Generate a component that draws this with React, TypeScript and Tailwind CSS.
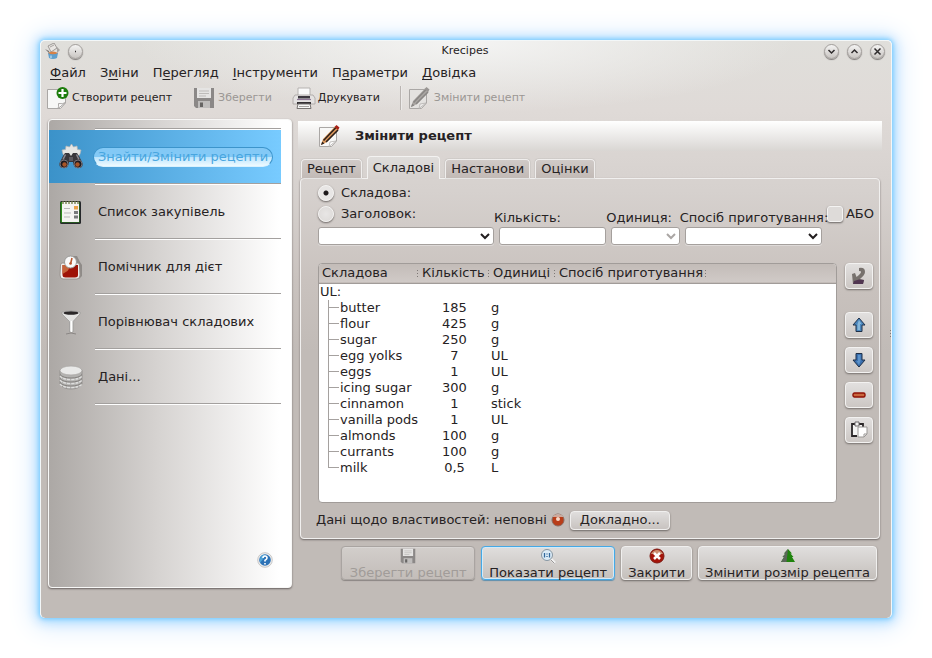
import React, { useState } from "react";

const navItems = [
  { label: "Знайти/Змінити рецепти", icon: <BinocularsIcon /> },
  { label: "Список закупівель", icon: <ListIcon /> },
  { label: "Помічник для дієт", icon: <ScaleIcon /> },
  { label: "Порівнювач складових", icon: <FunnelIcon /> },
  { label: "Дані...", icon: <DatabaseIcon /> },
];

const menus = [
  ["", "Ф", "айл"],
  ["З", "м", "іни"],
  ["П", "е", "регляд"],
  ["", "І", "нструменти"],
  ["П", "а", "раметри"],
  ["", "Д", "овідка"],
];

const ingredients = [
  ["butter", "185", "g"],
  ["flour", "425", "g"],
  ["sugar", "250", "g"],
  ["egg yolks", "7", "UL"],
  ["eggs", "1", "UL"],
  ["icing sugar", "300", "g"],
  ["cinnamon", "1", "stick"],
  ["vanilla pods", "1", "UL"],
  ["almonds", "100", "g"],
  ["currants", "100", "g"],
  ["milk", "0,5", "L"],
];

const tabs = ["Рецепт", "Складові", "Настанови", "Оцінки"];

function BinocularsIcon() {
  return (
    <svg width="26" height="26" viewBox="0 0 26 26" aria-hidden="true">
      <path d="M5 10l-1-4 3.500-.5L8 2l3.500 1L13.500 0l2 3L19 2l.5 3.500L23 6l-1 4-2 3H7z" fill="#e6e6e4" stroke="#b5b5b5" strokeWidth=".7" />
      <path d="M7 9h4l2 3 2-3h4l2 3 3.500 7q1 5-4 5-5 0-5.500-6h-4q-.5 6-5.500 6-5 0-4-5L5 12z" fill="#39363b" />
      <path d="M7.500 10.500l-2.500 5M18.500 10.500l2.500 5" stroke="#8b8890" strokeWidth="1.500" />
      <circle cx="6" cy="20" r="4" fill="#1d1a20" stroke="#77737a" />
      <circle cx="20" cy="20" r="4" fill="#1d1a20" stroke="#77737a" />
      <circle cx="6.500" cy="20.500" r="2.200" fill="#a85528" />
      <circle cx="19.500" cy="20.500" r="2.200" fill="#a85528" />
      <path d="M11 13h4v4h-4z" fill="#5c5960" />
    </svg>
  );
}

function ListIcon() {
  return (
    <svg width="26" height="26" viewBox="0 0 26 26" aria-hidden="true">
      <rect x="2" y="2" width="21" height="23" rx="1.500" fill="#25272a" />
      <path d="M2.500 3h19v20.500h-19z" fill="#2d8a1b" />
      <path d="M4 3h17v20H4z" fill="#f4f4f2" />
      <path d="M5 2v3M8 2v3M11 2v3M14 2v3M17 2v3M20 2v3" stroke="#6b7840" strokeWidth="1.300" />
      <path d="M6 9.500h6M6 14h7M6 18h6" stroke="#b9b9b9" />
      <rect x="16" y="7" width="4" height="3.500" fill="#e8a24a" />
      <rect x="16" y="12" width="4" height="3" fill="#77797b" />
      <rect x="16" y="16.500" width="4" height="3" fill="#77797b" />
    </svg>
  );
}

function ScaleIcon() {
  return (
    <svg width="26" height="26" viewBox="0 0 26 26" aria-hidden="true">
      <path d="M15 2h4l3 6 2 3v11l-3 3h-6z" fill="#8f8b88" />
      <path d="M4 9q-1 0-1.500 2L2 21q0 4 3 4h14q3 0 3-4L21.500 11Q21 9 20 9z" fill="#efefed" stroke="#99928d" />
      <path d="M4.500 11H20v10q0 2.500-3 2.500H7.500q-3 0-3-2.500z" fill="#9e1206" />
      <path d="M4.500 11h9l-4 6-5 3z" fill="#c5633a" />
      <circle cx="12.500" cy="8" r="6" fill="#fafafa" stroke="#9b9b99" />
      <path d="M12.500 10l1.500-6" stroke="#b8552b" strokeWidth="1.500" />
      <circle cx="12.500" cy="9.500" r="1.300" fill="#b8552b" />
    </svg>
  );
}

function FunnelIcon() {
  return (
    <svg width="26" height="26" viewBox="0 0 26 26" aria-hidden="true">
      <path d="M4 3q9-3 18 0v2l-7 7.500V23h-3.500V12.500L4 5z" fill="#e3e3e2" stroke="#9b9998" strokeWidth=".8" />
      <ellipse cx="13" cy="4" rx="7.500" ry="1.700" fill="#2a2728" />
      <path d="M13.500 12v11" stroke="#fff" strokeWidth="1.500" />
      <path d="M8 25q5-2 10 0" fill="none" stroke="#8b8785" />
    </svg>
  );
}

function DatabaseIcon() {
  return (
    <svg width="26" height="26" viewBox="0 0 26 26" aria-hidden="true">
      <path d="M2 6v14q3 5 11 5t11-5V6z" fill="#b3b2b0" stroke="#8e8c89" strokeWidth=".8" />
      <path d="M2 12q3 3.500 11 3.500T24 12M2 16q3 3.500 11 3.500T24 16M2 20q3 3.500 11 3.500T24 20" fill="none" stroke="#dededd" strokeWidth="1.400" strokeDasharray="3 1" />
      <path d="M2 10.500q3 3.500 11 3.500t11-3.500M2 14.500q3 3.500 11 3.500t11-3.500M2 18.500q3 3.500 11 3.500t11-3.500" fill="none" stroke="#787572" strokeWidth=".8" />
      <ellipse cx="13" cy="6.500" rx="11" ry="4.500" fill="#e9e9e8" stroke="#a9a7a5" strokeWidth=".8" />
    </svg>
  );
}

function FloppyIcon({ size, viewBox = "0 0 22 22" }: { size: number; viewBox?: string }) {
  return (
    <svg width={size} height={size} viewBox={viewBox} aria-hidden="true">
      <path d="M1 1h20v20H3l-2-2z" fill="#8b8887" />
      <path d="M4 1h14v10H4z" fill="#e5e4e3" />
      <path d="M6 4h10M6 6.500h10M6 9h7" stroke="#bdbbb9" />
      <path d="M5 14h12v7H5z" fill="#bfbdbc" />
      <path d="M7 15.500h3V20H7z" fill="#666463" />
    </svg>
  );
}

function NewDocIcon() {
  return (
    <svg width="24" height="24" viewBox="0 0 24 24" aria-hidden="true">
      <path d="M1.500 3.500h18V17l-5 5.500h-13z" fill="#f7f7f6" stroke="#aaa7a5" />
      <path d="M12 22.500q1-2 .5-5 4 1 7-1z" fill="#fff" stroke="#aaa7a5" />
      <circle cx="16.500" cy="7" r="6" fill="#1d7d0c" />
      <path d="M16.500 3v8M12.500 7h8" stroke="#fff" strokeWidth="2.200" />
    </svg>
  );
}

function PrinterIcon() {
  return (
    <svg width="24" height="24" viewBox="0 0 24 24" aria-hidden="true">
      <path d="M6 2h12v8H6z" fill="#fafafa" stroke="#b5b2b0" />
      <path d="M3 9h18l2 3v6H1v-6z" fill="#e4e2e1" stroke="#a5a19f" strokeWidth=".8" />
      <path d="M6 10h12v2.500H6z" fill="#3d3940" />
      <path d="M5 13.500h14" stroke="#8e7796" strokeWidth="1.200" />
      <path d="M5 16h14v2H5z" fill="#343134" />
      <path d="M6 18h12l1 4.500H5z" fill="#f7f7f6" stroke="#777472" />
      <path d="M7 20.500h10" stroke="#a7a4a2" />
    </svg>
  );
}

function EditIcon({ faded = false }: { faded?: boolean }) {
  const wood = faded ? "#aaa6a3" : "#df9a5d";
  const dark = faded ? "#8a8785" : "#2e211b";
  const tip = faded ? "#999593" : "#a81e14";
  return (
    <svg width="24" height="24" viewBox="0 0 24 24" aria-hidden="true">
      <path d="M1.500 3.500h17V17l-5 5.500h-12z" fill={faded ? "#e4e2e0" : "#f8f8f7"} stroke="#aaa7a5" />
      <path d="M11 22.500l1-4.500 6-1z" fill={faded ? "#eeeceb" : "#fff"} stroke="#b5b2b0" strokeWidth=".8" />
      <path d="M3 21l2-6L17 2.500l3.500 3L9 18z" fill={wood} />
      <path d="M5.500 16.500L18 3.500M8 18L20 6" stroke={dark} strokeWidth="1.600" />
      <path d="M3 21l1.200-3.500 2.300 2z" fill={dark} />
      <path d="M16.500 3l2-2 3 2.500-1.500 2.500z" fill={tip} />
    </svg>
  );
}

function AppIcon() {
  return (
    <svg width="16" height="16" viewBox="0 0 16 16" aria-hidden="true">
      <path d="M3 3l6-3 3 5-6 4z" fill="#e9e6e3" stroke="#8b8784" strokeWidth=".8" />
      <path d="M5 4l4-2" stroke="#a5a19e" />
      <path d="M0 6l4 2 1 3z" fill="#77726f" />
      <path d="M12 4l3 3-3 3z" fill="#a8a4a1" />
      <path d="M3 10h10l-1 5q-4 2-8 0z" fill="#5f9fcd" />
      <path d="M3 10q5-3 10 0-5 2.500-10 0z" fill="#d78146" />
      <path d="M6 12.500v2.500" stroke="#d5ecfa" />
    </svg>
  );
}

function Chevron({ className }: { className: string }) {
  return (
    <svg width="10" height="7" viewBox="0 0 10 7" className={className} aria-hidden="true">
      <path d="M1 1l4 4 4-4" fill="none" stroke="currentColor" strokeWidth="2" />
    </svg>
  );
}

function TitleButton({ label, path }: { label: string; path: string }) {
  return (
    <button
      aria-label={label}
      className="flex size-[15px] items-center justify-center rounded-full border border-[#a29e9b] bg-linear-to-b from-[#f4f4f3] to-[#c9c5c2] shadow-[0_1px_1px_#7d7978]"
    >
      <svg width="9" height="9" viewBox="0 0 9 9" aria-hidden="true">
        <path d={path} fill="none" stroke="#2e2b2c" strokeWidth="1.500" />
      </svg>
    </button>
  );
}

function ToolButton({ icon, label, disabled = false }: { icon: React.ReactNode; label: string; disabled?: boolean }) {
  return (
    <button disabled={disabled} className="flex items-center gap-[2px] text-[11px] whitespace-nowrap disabled:text-[#9b9794]">
      {icon}
      {label}
    </button>
  );
}

function SideButton({ label, children }: { label: string; children: React.ReactNode }) {
  return (
    <button
      aria-label={label}
      className="flex h-[26px] w-7 items-center justify-center rounded-[4px] border border-[#f3f2f1] bg-linear-to-b from-[#e2e0df] to-[#ccc7c4] shadow-[0_1px_2px_#75706d]"
    >
      {children}
    </button>
  );
}

function BlockArrow({ down = false }: { down?: boolean }) {
  return (
    <svg width="16" height="16" viewBox="0 0 16 16" className={down ? "rotate-180" : ""} aria-hidden="true">
      <path d="M8 1l6 7h-3v6.500H5V8H2z" fill={down ? "#3a6fae" : "#4a86bd"} stroke="#1f3048" />
      <path d="M8 3l2.500 4H9v6H6.500V7z" fill={down ? "#5c93cb" : "#86b7da"} />
    </svg>
  );
}

function ActionButton({
  icon,
  label,
  disabled = false,
  focused = false,
  wide = false,
}: {
  icon: React.ReactNode;
  label: string;
  disabled?: boolean;
  focused?: boolean;
  wide?: boolean;
}) {
  const edge = focused
    ? "border-[#45a9e6] shadow-[inset_0_0_0_1px_#d4eaf7,0_1px_1px_#5c8fae]"
    : disabled
      ? "border-[#a9a4a1] shadow-[inset_0_1px_0_#dad7d5,0_1px_1px_#8b8683]"
      : "border-[#f0efee] shadow-[0_1px_2px_#6f6a67]";
  return (
    <button
      disabled={disabled}
      className={`flex h-[34px] flex-col items-center justify-between rounded-[4px] border bg-linear-to-b from-[#e0dedd] to-[#c5c0bc] px-[6px] pt-px text-[13px] leading-[12px] whitespace-nowrap disabled:from-[#d2cecb] disabled:to-[#c3bdb9] disabled:text-[#a19c99] ${wide ? "min-w-[134px]" : ""} ${edge}`}
    >
      {icon}
      {label}
    </button>
  );
}

const fieldLook = "h-[18px] w-full rounded-[3px] border border-[#a5a09d] bg-white shadow-[0_1px_0_#dedad8]";

const fieldLabelLook = "relative z-10 -ml-[5px] block h-[17px] whitespace-nowrap";

function ComboField({ id, label, disabled = false }: { id: string; label?: string; disabled?: boolean }) {
  return (
    <div className="min-w-0">
      {label && (
        <label htmlFor={id} className={fieldLabelLook}>
          {label}
        </label>
      )}
      <div className="relative">
        <select id={id} disabled={disabled} aria-label={label ?? "Складова"} className={`block appearance-none ${fieldLook}`} />
        <Chevron className={`pointer-events-none absolute top-1.5 right-1 ${disabled ? "text-[#aaa6a4]" : "text-[#221e1f]"}`} />
      </div>
    </div>
  );
}

function RadioRow({ label, checked, onChange }: { label: string; checked: boolean; onChange: () => void }) {
  return (
    <label className="flex h-[21px] items-center gap-[7px]">
      <input
        type="radio"
        name="kind"
        checked={checked}
        onChange={onChange}
        className="size-4 appearance-none rounded-full border border-[#f4f3f2] bg-[radial-gradient(#e8e6e5,#dcd9d7)] shadow-[0_1px_2px_#6b6664] checked:bg-[radial-gradient(circle,#1d191a_2px,#e8e6e5_3px)]"
      />
      {label}
    </label>
  );
}

function Dots() {
  return (
    <span className="flex flex-col gap-[2px]" aria-hidden="true">
      <span className="size-px bg-[#7e7976]" />
      <span className="size-px bg-[#7e7976]" />
      <span className="size-px bg-[#7e7976]" />
    </span>
  );
}

export default function App() {
  const [kind, setKind] = useState(0);
  const [tab, setTab] = useState(1);
  return (
    <div className="bg-white p-10 font-['DejaVu_Sans',sans-serif] text-[13px] leading-4 text-[#262223]">
      <div className="relative rounded-[5px] border border-b-0 border-[#f3f7f8] bg-[radial-gradient(ellipse_330px_72px_at_50%_0,#f4f4f3,#f4f4f300),linear-gradient(180deg,#e0dfdb_0,#dfdad7_70px,#d6d1ce_150px,#c9c2be_240px,#c1bbb7_310px)] px-[7px] pb-[30px] shadow-[0_0_4px_1px_#78ccff,0_1px_12px_3px_#a6d9ff,0_2px_26px_8px_#deedff]">
        <div className="absolute top-1/2 right-0">
          <Dots />
        </div>
        <header className="-mr-px -ml-[3px] flex h-5 items-center justify-between">
          <div className="flex w-16 items-center gap-[7px]">
            <AppIcon />
            <TitleButton label="Меню вікна" path="M4 4.500h1" />
          </div>
          <h1 className="text-[11px]">Krecipes</h1>
          <div className="flex w-16 justify-end gap-2">
            <TitleButton label="Згорнути" path="M1.500 3l3 3 3-3" />
            <TitleButton label="Розгорнути" path="M1.500 6l3-3 3 3" />
            <TitleButton label="Закрити вікно" path="M1.500 1.500l6 6M7.500 1.500l-6 6" />
          </div>
        </header>

        <nav className="flex h-[23px] items-center gap-[14px] pl-[2px]">
          {menus.map(([pre, key, post]) => (
            <button key={post}>
              {pre}
              <span className="underline underline-offset-2 [text-decoration-skip-ink:none]">{key}</span>
              {post}
            </button>
          ))}
        </nav>

        <div className="-ml-0.5 flex h-7 items-center gap-5">
          <ToolButton icon={<NewDocIcon />} label="Створити рецепт" />
          <ToolButton icon={<FloppyIcon size={24} viewBox="-1 -1 24 24" />} label="Зберегти" disabled />
          <ToolButton icon={<PrinterIcon />} label="Друкувати" />
          <div className="flex items-center gap-[7px]">
            <span className="h-6 w-px bg-[#bab5b2] shadow-[1px_0_0_#eceae9]" />
            <ToolButton icon={<EditIcon faded />} label="Змінити рецепт" disabled />
          </div>
        </div>

        <div className="mt-[7px] flex gap-[6px]">
          <aside className="flex w-[244px] shrink-0 flex-col rounded-[4px] border border-[#f8f8f7] bg-linear-to-r from-[#aca8a5] via-[#d6d3d1] via-45% to-white to-95% pt-2 pr-[10px] shadow-[0_1px_2px_#67615f]">
            {navItems.map((item, i) => (
              <React.Fragment key={item.label}>
                <hr className="ml-[46px] h-0.5 border-t border-b border-t-[#a3a09e] border-b-white" />
                <button
                  className={`flex h-[53px] items-center gap-[9px] pl-[9px] ${i === 0 ? "bg-linear-to-r from-[#3b92c9] to-[#78cbff]" : ""}`}
                >
                  {item.icon}
                  <span
                    className={`rounded-full border px-1 py-px whitespace-nowrap ${i === 0 ? "border-[#3c94cb] border-b-[#d9f2ff] bg-linear-to-b from-[#83c9f6] from-50% via-[#b9e4fd] via-50% to-[#eefaff] text-[#48a6df]" : "border-transparent"}`}
                  >
                    {item.label}
                  </span>
                </button>
              </React.Fragment>
            ))}
            <hr className="ml-[46px] h-0.5 border-t border-b border-t-[#a3a09e] border-b-white" />
            <button aria-label="Довідка" className="mt-auto mr-2 mb-[19px] self-end">
              <svg width="16" height="16" viewBox="0 0 16 16" aria-hidden="true">
                <circle cx="8" cy="8" r="7.300" fill="#efefef" stroke="#bcbab9" strokeWidth=".8" />
                <circle cx="8" cy="8" r="5.800" fill="#2d72b6" />
                <path d="M3 7q1-5 6-4Q6 7 3 11z" fill="#4ea5d8" />
                <path d="M6 6q0-2 2-2t2 2q0 1-2 2.300V9.500M8 11v1.500" fill="none" stroke="#fff" strokeWidth="1.600" />
              </svg>
            </button>
          </aside>

          <main className="min-w-0 flex-1 pt-[2px] pr-[2px] pb-2">
            <div className="flex h-[30px] items-center gap-[13px] bg-linear-to-b from-white to-[#d9d6d3] pl-5 font-bold">
              <EditIcon />
              <h2>Змінити рецепт</h2>
            </div>

            <div className="mt-[5px] flex h-[22px] items-end gap-[5px] pl-[3px]" role="tablist">
              {tabs.map((name, i) => (
                <button
                  key={name}
                  role="tab"
                  aria-selected={tab === i}
                  onClick={() => setTab(i)}
                  className={`relative rounded-t-[4px] border border-b-0 px-[5px] whitespace-nowrap ${
                    tab === i
                      ? "z-10 -mb-px h-[23px] border-[#f3f2f1] bg-linear-to-b from-[#dfdddb] to-[#d6d1ce]"
                      : "h-[19px] border-[#f0eeed] bg-linear-to-b from-[#d0cac7] to-[#c2bab6] shadow-[0_0_1px_#7f7a77]"
                  }`}
                >
                  {name}
                </button>
              ))}
            </div>

            <section className="mr-[2px] ml-[2px] rounded-[4px] border border-[#f1f0ef] px-[5px] pb-[8px] shadow-[0_1px_2px_#6f6967]">
              <div className="flex items-end gap-[5px] pt-[3px] pl-3">
                <div className="grid min-w-0 flex-1 grid-cols-[177fr_108fr_69fr_138fr] items-end gap-[5px]">
                  <div className="min-w-0">
                    <RadioRow label="Складова:" checked={kind === 0} onChange={() => setKind(0)} />
                    <RadioRow label="Заголовок:" checked={kind === 1} onChange={() => setKind(1)} />
                    <div className="pt-[3px]">
                      <ComboField id="ingredient" />
                    </div>
                  </div>
                  <div className="min-w-0">
                    <label htmlFor="amount" className={fieldLabelLook}>
                      Кількість:
                    </label>
                    <input id="amount" className={`block ${fieldLook}`} />
                  </div>
                  <ComboField id="unit" label="Одиниця:" disabled />
                  <ComboField id="prep" label="Спосіб приготування:" />
                </div>
                <label className="mb-[23px] flex items-center gap-[3px]">
                  <input
                    type="checkbox"
                    className="size-4 appearance-none rounded-[3px] border border-[#f4f3f2] bg-[#dedbd9] shadow-[0_1px_2px_#6b6664]"
                  />
                  АБО
                </label>
              </div>

              <div className="mt-[18px] flex gap-2 pr-px pl-3">
                <div className="h-[240px] min-w-0 flex-1 overflow-hidden rounded-[4px] border border-[#a19c99] bg-white">
                  <table className="w-full table-fixed border-collapse">
                    <colgroup>
                      <col className="w-[100px]" />
                      <col className="w-[71px]" />
                      <col className="w-[66px]" />
                      <col className="w-[151px]" />
                      <col />
                    </colgroup>
                    <thead>
                      <tr className="h-[19px] border-b border-[#a19c99] bg-linear-to-b from-[#c3bcb8] to-[#d0cac7] text-left">
                        {["Складова", "Кількість", "Одиниці", "Спосіб приготування"].map((h) => (
                          <th key={h} className="p-0 pr-px pl-[3px] font-normal whitespace-nowrap">
                            <span className="flex items-center justify-between">
                              {h}
                              <Dots />
                            </span>
                          </th>
                        ))}
                        <th className="p-0" />
                      </tr>
                    </thead>
                    <tbody>
                      <tr className="h-4">
                        <td className="p-0 pl-px" colSpan={5}>
                          UL:
                        </td>
                      </tr>
                      {ingredients.map(([name, amount, unit], i) => (
                        <tr key={name} className="h-4">
                          <td className="p-0 whitespace-nowrap">
                            <span className="flex h-4 pl-[9px]">
                              <span className="mr-px flex w-[11px] flex-col" aria-hidden="true">
                                <span className="h-2 border-b border-l border-[#a5a19f]" />
                                {i < ingredients.length - 1 && <span className="h-2 border-l border-[#a5a19f]" />}
                              </span>
                              {name}
                            </span>
                          </td>
                          <td className="p-0 text-center">{amount}</td>
                          <td className="p-0 pl-px">{unit}</td>
                          <td className="p-0" colSpan={2} />
                        </tr>
                      ))}
                    </tbody>
                  </table>
                </div>
                <div className="flex flex-col gap-[9px]">
                  <SideButton label="Додати складову">
                    <svg width="16" height="18" viewBox="0 0 16 18" aria-hidden="true">
                      <path d="M8 1q6-1 6 4 0 3-5 7l4 1-1 4H2L1 7l3-1 1.500 4q5-4 4.500-5.500Q10 4 8 4z" fill="#77716d" />
                      <path d="M2 17l1-3 5-1.500 5 .5-1 4z" fill="#513651" />
                    </svg>
                  </SideButton>
                  <div className="h-[5px]" />
                  <SideButton label="Вгору">
                    <BlockArrow />
                  </SideButton>
                  <SideButton label="Вниз">
                    <BlockArrow down />
                  </SideButton>
                  <SideButton label="Вилучити">
                    <svg width="14" height="6" viewBox="0 0 14 6" aria-hidden="true">
                      <rect x="1" y="1" width="12" height="4" rx="1.500" fill="#c9673e" stroke="#8f1206" strokeWidth="1.400" />
                    </svg>
                  </SideButton>
                  <SideButton label="Вставити">
                    <svg width="18" height="18" viewBox="0 0 18 18" aria-hidden="true">
                      <path d="M2 3h11v12H2z" fill="#f5f5f4" />
                      <path d="M5 3H2v12h5M9 3h4v3" fill="none" stroke="#2b2729" strokeWidth="1.800" />
                      <path d="M5 1h4v4H5z" fill="#f5f5f4" stroke="#6a6668" />
                      <path d="M8 6h9v7l-3 3H8z" fill="#fff" stroke="#9a9795" />
                      <path d="M14 16v-3h3" fill="none" stroke="#9a9795" />
                    </svg>
                  </SideButton>
                </div>
              </div>

              <div className="mt-[7px] flex h-5 items-center gap-1 pl-[10px]">
                <span className="whitespace-nowrap">Дані щодо властивостей: неповні</span>
                <svg width="14" height="14" viewBox="0 0 14 14" aria-hidden="true">
                  <circle cx="7" cy="7" r="6" fill="#b83d19" stroke="#8a6a60" />
                  <path d="M1.500 4q2-3 5.500-3t5.500 3z" fill="#dcd5d1" opacity=".7" />
                  <circle cx="7" cy="6" r="2" fill="#f8d8c8" />
                </svg>
                <button className="ml-px h-[19px] rounded-[4px] border border-[#f0efee] bg-linear-to-b from-[#e0dedd] to-[#c8c3c0] px-[9px] leading-4 shadow-[0_1px_2px_#6f6a67]">
                  Докладно...
                </button>
              </div>
            </section>

            <div className="mt-[7px] flex justify-end gap-[6px] pr-[5px]">
              <ActionButton icon={<FloppyIcon size={16} />} label="Зберегти рецепт" disabled wide />
              <ActionButton
                focused
                wide
                label="Показати рецепт"
                icon={
                  <svg width="16" height="16" viewBox="0 0 16 16" aria-hidden="true">
                    <path d="M11 11l4 4" stroke="#f0f0f0" strokeWidth="2.500" />
                    <path d="M11 12l3.500 3.500" stroke="#9a9796" />
                    <circle cx="7" cy="7" r="5.500" fill="#dcecf7" stroke="#8796a2" />
                    <path d="M4.500 5v4.500M9.500 5v4.500M7 5.500v1M7 8v1" stroke="#30679b" strokeWidth="1.300" />
                  </svg>
                }
              />
              <ActionButton
                label="Закрити"
                icon={
                  <svg width="16" height="16" viewBox="0 0 16 16" aria-hidden="true">
                    <circle cx="8" cy="8" r="7" fill="#a51409" stroke="#7d1a12" />
                    <path d="M2 6q2-4 6-4t6 4z" fill="#cc8f72" />
                    <path d="M5 5l6 6M11 5l-6 6" stroke="#fff" strokeWidth="2.500" />
                  </svg>
                }
              />
              <ActionButton
                label="Змінити розмір рецепта"
                icon={
                  <svg width="16" height="16" viewBox="0 0 16 16" aria-hidden="true">
                    <path d="M8 1l4 4.500h-1.500L13.500 9H12l3 5H1l3-5H2.500l3-3.500H4z" fill="#1f830d" />
                    <path d="M8 1L6.500 14H1l3-5H2.500l3-3.500H4z" fill="#5b665a" />
                  </svg>
                }
              />
            </div>
          </main>
        </div>
      </div>
    </div>
  );
}
